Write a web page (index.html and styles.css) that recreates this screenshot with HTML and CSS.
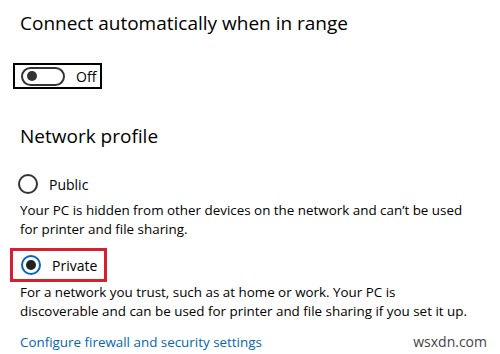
FILE: index.html
```html
<!DOCTYPE html>
<html>
<head>
<meta charset="utf-8">
<link rel="stylesheet" href="styles.css">
</head>
<body>
<div class="page">
  <h2 class="heading first">Connect automatically when in range</h2>
  <div class="toggle-wrap">
    <span class="toggle"><span class="knob"></span></span>
    <span class="toggle-label">Off</span>
  </div>
  <h2 class="heading second">Network profile</h2>
  <div class="option">
    <span class="radio"></span>
    <span class="option-label">Public</span>
  </div>
  <p class="desc">Your PC is hidden from other devices on the network and can’t be used<br>for printer and file sharing.</p>
  <div class="option selected">
    <span class="radio on"><span class="dot"></span></span>
    <span class="option-label">Private</span>
  </div>
  <p class="desc tight">For a network you trust, such as at home or work. Your PC is<br>discoverable and can be used for printer and file sharing if you set it up.</p>
  <div class="footer">
    <a class="link" href="#">Configure firewall and security settings</a>
    <span class="watermark">wsxdn.com</span>
  </div>
</div>
</body>
</html>
```
FILE: styles.css
```css
html, body {
  margin: 0;
  padding: 0;
  background: #ffffff;
}
body {
  font-family: "Open Sans", "Noto Sans", sans-serif;
  color: #000000;
  width: 500px;
  height: 354px;
  overflow: hidden;
}
.page {
  padding: 10px 0 0 20px;
  box-sizing: border-box;
}
.heading {
  font-weight: 400;
  font-size: 19px;
  line-height: 26px;
  margin: 0;
}
.toggle-wrap {
  display: inline-flex;
  align-items: center;
  box-sizing: border-box;
  width: 89px;
  height: 26px;
  margin: 27px 0 0 -7px;
  border: 2px solid #000;
  padding-left: 6px;
}
.toggle {
  box-sizing: border-box;
  width: 44px;
  height: 19px;
  border: 2px solid #333;
  border-radius: 10px;
  display: flex;
  align-items: center;
  padding-left: 4px;
}
.knob {
  width: 10px;
  height: 10px;
  border-radius: 50%;
  background: #333;
}
.toggle-label {
  font-size: 14px;
  margin-left: 11px;
}
.second {
  margin-top: 34px;
}
.option {
  display: flex;
  align-items: center;
  margin-top: 24px;
  height: 22px;
}
.radio {
  box-sizing: border-box;
  width: 20px;
  height: 20px;
  border: 2px solid #333;
  border-radius: 50%;
  display: flex;
  align-items: center;
  justify-content: center;
  margin-left: -2px;
}
.radio.on {
  border-color: #0067c0;
}
.dot {
  width: 10px;
  height: 10px;
  border-radius: 50%;
  background: #222;
}
.option-label {
  font-size: 14px;
  margin-left: 11px;
}
.option.selected {
  box-sizing: border-box;
  width: 97px;
  height: 34px;
  margin: 9px 0 0 -10px;
  padding-left: 10px;
  border: 3px solid #d6202f;
}
.desc {
  margin: 6px 0 0;
  font-size: 13.4px;
  line-height: 19px;
  white-space: nowrap;
}
.desc.tight {
  margin-top: 1px;
}
.footer {
  display: flex;
  align-items: baseline;
  justify-content: space-between;
  margin-top: 11px;
  padding-right: 13px;
  line-height: 19px;
}
.link {
  color: #0067b8;
  font-size: 13.4px;
  text-decoration: none;
}
.watermark {
  color: #444;
  font-size: 14px;
}
```
